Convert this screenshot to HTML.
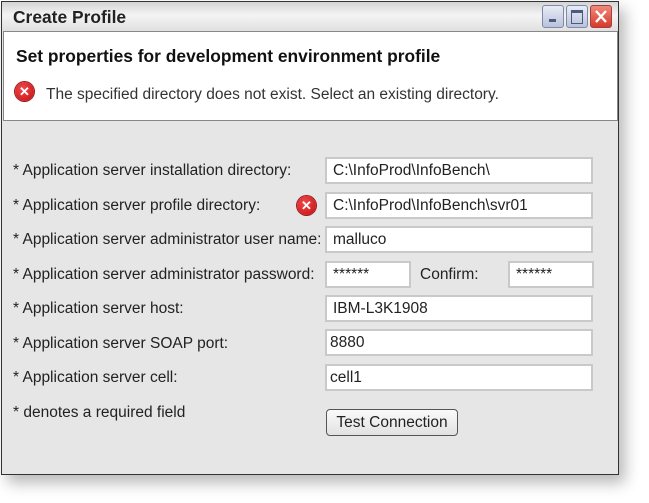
<!DOCTYPE html>
<html><head><style>
body{margin:0;width:649px;height:503px;background:#fff;position:relative;overflow:hidden;font-family:"Liberation Sans",Arial,sans-serif;color:#222}
.win{position:absolute;left:1px;top:1px;width:616px;height:472px;border:1px solid #333;background:#e6e6e6;box-shadow:6px 8px 14px rgba(0,0,0,0.28)}
.title{position:absolute;left:0;top:0;width:616px;height:29px;background:linear-gradient(#d4d4d4,#f4f4f4 45%,#e0e0e0);}
.title span{position:absolute;left:11px;top:5px;font-size:17.4px;font-weight:bold;color:#222}
.btn{position:absolute;top:3px;width:20px;height:21px;border:1px solid #7e8aa8;border-radius:3px;background:linear-gradient(#e8ecf6,#b9c2da)}
.head{position:absolute;left:1px;top:29px;width:613px;height:88px;background:#fff;border:1px solid #888;}
.t{position:absolute;font-size:15.5px;white-space:nowrap}
.in{position:absolute;left:325px;width:258px;height:23px;background:#fff;border:2px solid #c9c9c9;font-size:15.5px;line-height:23px;padding-left:6px;box-sizing:content-box}
.err{position:absolute;width:19px;height:19px;border-radius:50%;background:radial-gradient(circle at 40% 35%,#f04a4a,#c40d14);color:#fff;font-size:13px;font-weight:bold;text-align:center;line-height:19px;box-shadow:0 0 0 1px #9a1a1a}
</style></head><body>
<div class="win">
 <div class="title"><span>Create Profile</span>
  <div class="btn" style="left:540px"><div style="position:absolute;left:6px;top:13px;width:7px;height:3px;background:#4a5a80"></div></div>
  <div class="btn" style="left:564px"><div style="position:absolute;left:4px;top:4px;width:10px;height:10px;border:1px solid #4a5a80;border-top-width:3px"></div></div>
  <div class="btn" style="left:588px;border-color:#a04040;background:linear-gradient(#f08a7a,#d8382a)">
   <svg width="20" height="21" style="position:absolute;left:0;top:0"><path d="M5 5L15 16M15 5L5 16" stroke="#fff" stroke-width="2.4"/></svg></div>
 </div>
 <div class="head">
  <div class="t" style="left:12px;top:14px;font-size:17.4px;font-weight:bold;color:#111">Set properties for development environment profile</div>
  <div class="err" style="left:11px;top:50px">✕</div>
  <div class="t" style="left:42px;top:54px;color:#333">The specified directory does not exist. Select an existing directory.</div>
 </div>
</div>
<div class="t" style="left:13px;top:162px">* Application server installation directory:</div>
<div class="t" style="left:13px;top:197px">* Application server profile directory:</div>
<div class="t" style="left:13px;top:231px">* Application server administrator user name:</div>
<div class="t" style="left:13px;top:266px">* Application server administrator password:</div>
<div class="t" style="left:13px;top:300px">* Application server host:</div>
<div class="t" style="left:13px;top:335px">* Application server SOAP port:</div>
<div class="t" style="left:13px;top:369px">* Application server cell:</div>
<div class="t" style="left:13px;top:404px">* denotes a required field</div>
<div class="err" style="left:297px;top:196px">✕</div>
<div class="in" style="top:157px">C:\InfoProd\InfoBench\</div>
<div class="in" style="top:192px">C:\InfoProd\InfoBench\svr01</div>
<div class="in" style="top:226px">malluco</div>
<div class="in" style="top:261px;width:76px">******</div>
<div class="t" style="left:420px;top:266px">Confirm:</div>
<div class="in" style="top:261px;left:508px;width:76px">******</div>
<div class="in" style="top:295px">IBM-L3K1908</div>
<div class="in" style="top:329px;padding-left:3px;width:261px">8880</div>
<div class="in" style="top:364px;padding-left:3px;width:261px">cell1</div>
<div style="position:absolute;left:326px;top:409px;width:130px;height:25px;border:1px solid #555;border-radius:4px;background:linear-gradient(#fafafa,#e2e2e2);font-size:15.5px;text-align:center;line-height:25px">Test Connection</div>
</body></html>
